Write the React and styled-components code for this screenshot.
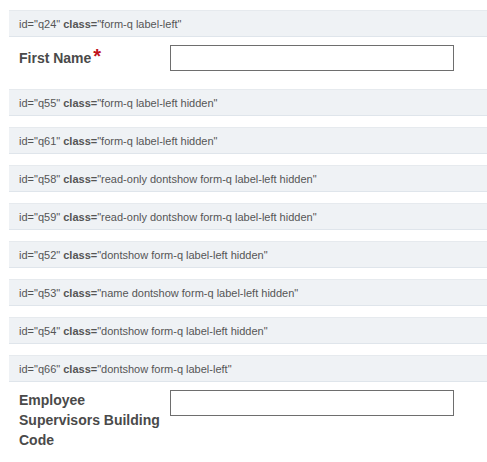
import React from "react";
import styled, { createGlobalStyle } from "styled-components";

const Global = createGlobalStyle`
  html, body { margin: 0; padding: 0; background: #fff; }
  body { font-family: "Liberation Sans", Arial, sans-serif; }
`;

const Page = styled.div`
  padding: 10px 0 0 9px;
  display: flex;
  flex-direction: column;
  gap: 11px;
`;

const Group = styled.div`
  display: flex;
  flex-direction: column;
`;

const InfoBar = styled.div`
  box-sizing: border-box;
  height: 27px;
  background: #eff2f5;
  border-top: 1px solid #e6eaee;
  border-bottom: 1px solid #dfe5eb;
  padding: 0 10px;
  display: flex;
  align-items: center;
  font-size: 11px;
  color: #555;
  white-space: nowrap;
  b { font-weight: bold; }
`;

const FieldRow = styled.div`
  display: flex;
  align-items: flex-start;
  padding: 8px 0 7px 10px;
`;

const Label = styled.label`
  width: 145px;
  margin-right: 6px;
  font-size: 14px;
  font-weight: bold;
  line-height: 20px;
  color: #4a4a4a;
`;

const Star = styled.span`
  color: #c0121b;
  font-size: 20px;
  line-height: normal;
  vertical-align: baseline;
  margin-left: 2px;
`;

const TextInput = styled.input`
  box-sizing: border-box;
  width: 284px;
  height: 26px;
  margin: 0;
  border: 1px solid #6e6e6e;
  background: #fff;
  outline: none;
`;

const bars = [
  ["q24", "form-q label-left", { label: "First Name", required: true }],
  ["q55", "form-q label-left hidden"],
  ["q61", "form-q label-left hidden"],
  ["q58", "read-only dontshow form-q label-left hidden"],
  ["q59", "read-only dontshow form-q label-left hidden"],
  ["q52", "dontshow form-q label-left hidden"],
  ["q53", "name dontshow form-q label-left hidden"],
  ["q54", "dontshow form-q label-left hidden"],
  ["q66", "dontshow form-q label-left", { label: "Employee Supervisors Building Code" }],
];

export default function App() {
  return (
    <>
      <Global />
      <Page>
        {bars.map(([id, cls, field]) => (
          <Group key={id}>
            <InfoBar>
              id="{id}"&nbsp;<b>class=</b>"{cls}"
            </InfoBar>
            {field && (
              <FieldRow>
                <Label>
                  {field.label}
                  {field.required && <Star>*</Star>}
                </Label>
                <TextInput type="text" />
              </FieldRow>
            )}
          </Group>
        ))}
      </Page>
    </>
  );
}
